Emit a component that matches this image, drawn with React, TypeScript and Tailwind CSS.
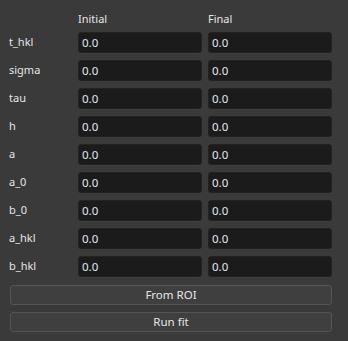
import { Fragment } from 'react';

const labels = ['t_hkl', 'sigma', 'tau', 'h', 'a', 'a_0', 'b_0', 'a_hkl', 'b_hkl'];

function Field({ value }: { value: string }) {
  return (
    <div className="flex h-[21px] items-center rounded-[3px] border border-[#222] bg-[#1b1b1b] px-[3px] text-[11.5px] text-[#e4e8ee]">
      {value}
    </div>
  );
}

export default function App() {
  return (
    <div
      className="h-[341px] w-[348px] bg-[#3a3a3a] pl-[9px] pr-[16px] pt-[12px] text-[11px] text-[#e6e6e6]"
      style={{ fontFamily: '"Noto Sans", "DejaVu Sans", sans-serif' }}
    >
      <div className="grid grid-cols-[63px_124px_124px] gap-x-[6px] gap-y-[7px]">
        <div />
        <div className="h-[13px] leading-[13px]">Initial</div>
        <div className="h-[13px] leading-[13px]">Final</div>
        {labels.map((l) => (
          <Fragment key={l}>
            <div className="flex h-[21px] items-center">{l}</div>
            <Field value="0.0" />
            <Field value="0.0" />
          </Fragment>
        ))}
      </div>
      <div className="ml-px mt-[8px] flex w-[322px] flex-col gap-[7px]">
        <button type="button" className="h-[20px] rounded-[3px] border border-[#555] bg-[#3f3f3f] text-[11.5px] leading-none text-[#e6e6e6]">
          From ROI
        </button>
        <button type="button" className="h-[20px] rounded-[3px] border border-[#555] bg-[#3f3f3f] text-[11.5px] leading-none text-[#e6e6e6]">
          Run fit
        </button>
      </div>
    </div>
  );
}
